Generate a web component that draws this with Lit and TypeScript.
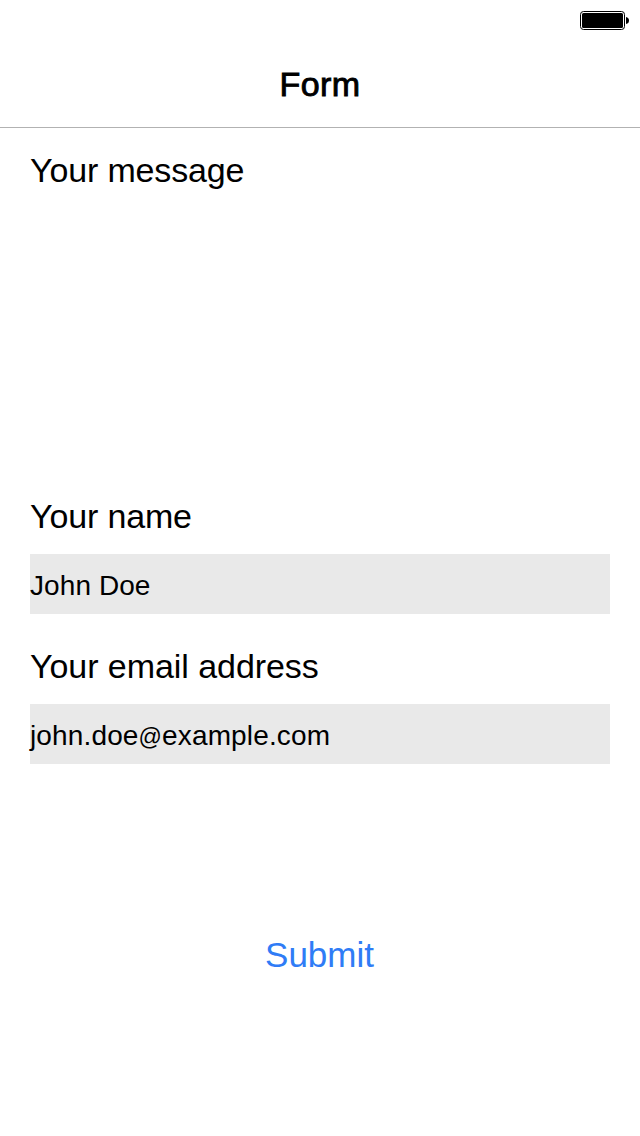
import { LitElement, html, css } from "lit";
import { customElement } from "lit/decorators.js";

@customElement("app-root")
export class AppRoot extends LitElement {
  static styles = css`
    :host {
      display: flex;
      flex-direction: column;
      height: 1136px;
      background: #fff;
      color: #000;
      font-family: "Liberation Sans", Arial, sans-serif;
    }
    .status {
      height: 40px;
      display: flex;
      justify-content: flex-end;
      align-items: center;
      padding-right: 11px;
      box-sizing: border-box;
    }
    .status svg { display: block; }
    .nav {
      height: 88px;
      box-sizing: border-box;
      border-bottom: 1px solid #b2b2b2;
      display: flex;
      align-items: center;
      justify-content: center;
    }
    .title {
      font-size: 34px;
      line-height: 40px;
      letter-spacing: 0.4px;
      -webkit-text-stroke: 0.9px #000;
    }
    .text { display: block; width: max-content; white-space: pre; }
    .form { display: flex; flex-direction: column; padding: 0 30px; }
    .label { font-size: 34px; line-height: 40px; letter-spacing: -0.15px; }
    .message { margin-top: 22px; height: 324px; }
    .name { margin-top: 22px; }
    .email { margin-top: 32px; }
    .email .label { letter-spacing: -0.06px; }
    .field {
      height: 60px;
      margin-top: 18px;
      background: #e9e9e9;
      font-size: 28px;
      line-height: 64px;
    }
    .name .field { letter-spacing: 0.08px; }
    .email .field { letter-spacing: 0.14px; }
    .at { font-size: 23px; line-height: 1; }
    .submit {
      align-self: center;
      margin-top: 171px;
      margin-right: 1px;
      padding: 0;
      border: 0;
      background: none;
      font: 35px/40px "Liberation Sans", Arial, sans-serif;
      color: #2f7cf6;
    }
  `;

  render() {
    return html`
      <div class="status">
        <svg width="49" height="19" viewBox="0 0 49 19">
          <rect x="0.5" y="0.5" width="44" height="18" rx="3" fill="none" stroke="#000" />
          <rect x="2" y="2" width="41" height="15" rx="1.5" />
          <path d="M46 6 Q49 6.500 49 9.500 Q49 12.500 46 13Z" />
        </svg>
      </div>
      <header class="nav"><span class="text title">Form</span></header>
      <main class="form">
        <div class="message"><span class="text label">Your message</span></div>
        <div class="name">
          <span class="text label">Your name</span>
          <div class="field"><span class="text">John Doe</span></div>
        </div>
        <div class="email">
          <span class="text label">Your email address</span>
          <div class="field"><span class="text">john.doe<span class="at">@</span>example.com</span></div>
        </div>
        <button class="submit"><span class="text">Submit</span></button>
      </main>
    `;
  }
}
